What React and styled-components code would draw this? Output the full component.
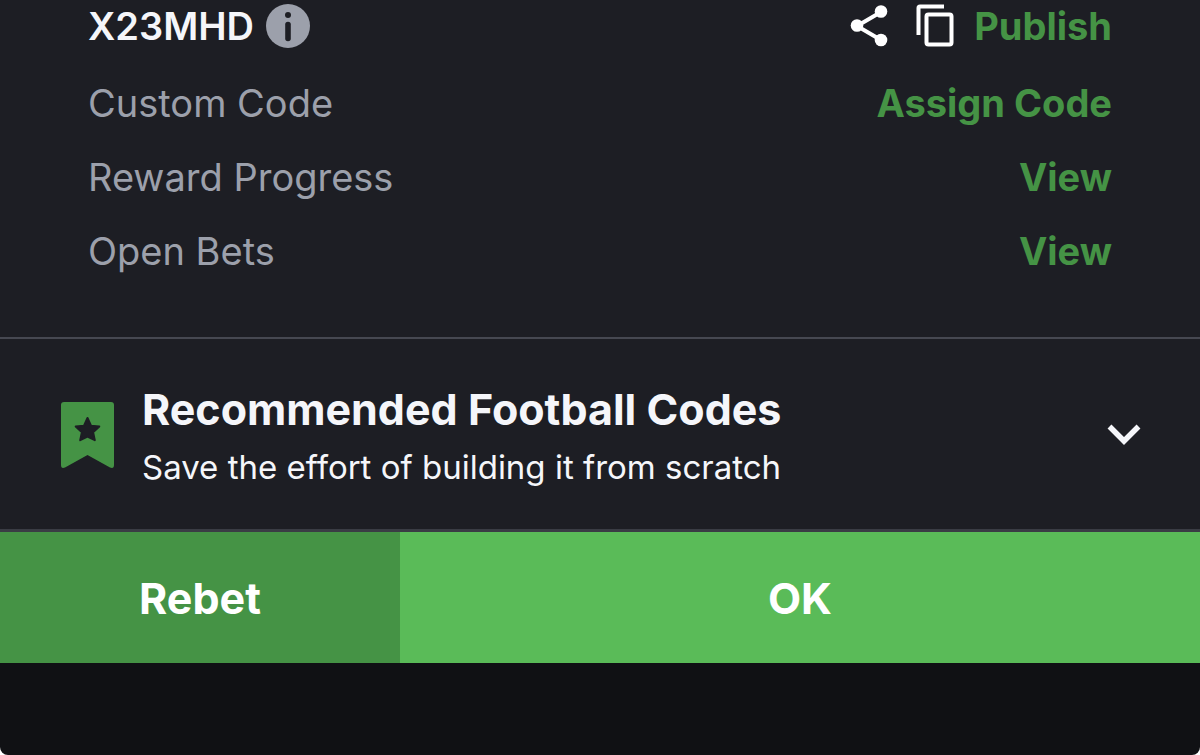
import React from "react";
import styled, { createGlobalStyle } from "styled-components";

const GlobalStyle = createGlobalStyle`
  *, *::before, *::after { box-sizing: border-box; }
  body { margin: 0; background: #fff; color: #f5f6fa; font-family: Inter, sans-serif; }
  button { border: 0; padding: 0; margin: 0; background: none; font: inherit; color: inherit; cursor: pointer; }
  svg { display: block; }
`;

const Page = styled.div`
  display: flex;
  flex-direction: column;
  min-height: 100vh;
  background: #101114;
  border-radius: 0 0 8px 8px;
  overflow: hidden;
`;

const Details = styled.section`
  display: flex;
  flex-direction: column;
  padding: 0 88px 49px;
  background: #1d1e24;
  border-bottom: 2px solid #464851;
`;

const Row = styled.div`
  display: flex;
  align-items: center;
  justify-content: space-between;
  height: ${(p) => (p.$first ? "66px" : "74px")};
  padding-bottom: ${(p) => (p.$first ? "14px" : "0")};
`;

const Group = styled.div`
  display: flex;
  align-items: center;
  gap: ${(p) => p.$gap};
`;

const Code = styled.strong`
  font-size: 38px;
  line-height: 48px;
  font-weight: 600;
`;

const Label = styled.span`
  font-size: 38px;
  line-height: 48px;
  color: #9ca0ab;
`;

const Action = styled.button`
  && {
    font-size: 38px;
    line-height: 48px;
    font-weight: 700;
    color: #459345;
  }
`;

const Recommended = styled.button`
  && {
    display: flex;
    align-items: center;
    width: 100%;
    padding: 38px 58px 36px;
    background: #1d1e24;
    border-bottom: 3px solid #3a3c44;
    text-align: left;
  }
`;

const Copy = styled.span`
  display: flex;
  flex: 1;
  flex-direction: column;
  margin-left: 26px;
`;

const Title = styled.span`
  font-size: 43px;
  line-height: 64px;
  font-weight: 700;
`;

const Subtitle = styled.span`
  font-size: 33px;
  line-height: 52px;
`;

const Footer = styled.footer`
  display: grid;
  grid-template-columns: 1fr 2fr;
`;

const FooterButton = styled.button`
  && {
    height: 131px;
    background: ${(p) => (p.$primary ? "#5abb58" : "#459345")};
    color: #fff;
    font-size: 43px;
    font-weight: 700;
  }
`;

const InfoIcon = () => (
  <svg width="44" height="44" viewBox="0 0 44 44" aria-hidden="true">
    <circle cx="22" cy="22" r="22" fill="#9ca0ab" />
    <circle cx="22" cy="11" r="3" fill="#1d1e24" />
    <path d="M22 20.5v14" stroke="#1d1e24" strokeWidth="5.6" strokeLinecap="round" />
  </svg>
);

const ShareIcon = () => (
  <svg width="38" height="42" viewBox="0 0 38 42" aria-hidden="true">
    <path d="M31 7 7 21l24 14" fill="none" stroke="#fff" strokeWidth="4" />
    <circle cx="31" cy="6.5" r="6.3" fill="#fff" />
    <circle cx="7" cy="20.5" r="6.3" fill="#fff" />
    <circle cx="31" cy="35" r="6.3" fill="#fff" />
  </svg>
);

const CopyIcon = () => (
  <svg width="38" height="44" viewBox="0 0 38 44" fill="none" stroke="#fff" strokeWidth="4" aria-hidden="true">
    <path d="M2.5 31V4q0-1.5 1.5-1.5h24" />
    <rect x="10.5" y="10.5" width="25" height="30" rx="2" />
  </svg>
);

const BookmarkIcon = () => (
  <svg width="58" height="68" viewBox="0 0 58 68" aria-hidden="true">
    <path d="M6 1h47q3 0 3 3v60q0 4-4 2.500L29.500 54 7 66.500q-4 1.500-4-2.500V4q0-3 3-3z" fill="#459345" />
    <path d="m29.500 17 3.500 7.700 8.300.8-6.200 5.700 1.700 8-7.300-3.700-7.300 3.700 1.700-8-6.200-5.700 8.300-.8z" fill="#1d1e24" stroke="#1d1e24" strokeWidth="2" strokeLinejoin="round" />
  </svg>
);

const ChevronIcon = () => (
  <svg width="36" height="24" viewBox="0 0 36 24" fill="none" stroke="#f5f6fa" strokeWidth="5.5" aria-hidden="true">
    <path d="M3.500 3.500 18 18 32.500 3.500" />
  </svg>
);

export default function App() {
  return (
    <>
      <GlobalStyle />
      <Page>
        <Details>
          <Row $first>
            <Group $gap="12px">
              <Code>X23MHD</Code>
              <button aria-label="Code information"><InfoIcon /></button>
            </Group>
            <Group $gap="20px">
              <Group $gap="28px">
                <button aria-label="Share"><ShareIcon /></button>
                <button aria-label="Copy"><CopyIcon /></button>
              </Group>
              <Action>Publish</Action>
            </Group>
          </Row>
          <Row><Label>Custom Code</Label><Action>Assign Code</Action></Row>
          <Row><Label>Reward Progress</Label><Action>View</Action></Row>
          <Row><Label>Open Bets</Label><Action>View</Action></Row>
        </Details>
        <Recommended aria-expanded="false">
          <BookmarkIcon />
          <Copy>
            <Title>Recommended Football Codes</Title>
            <Subtitle>Save the effort of building it from scratch</Subtitle>
          </Copy>
          <ChevronIcon />
        </Recommended>
        <Footer>
          <FooterButton>Rebet</FooterButton>
          <FooterButton $primary>OK</FooterButton>
        </Footer>
      </Page>
    </>
  );
}
